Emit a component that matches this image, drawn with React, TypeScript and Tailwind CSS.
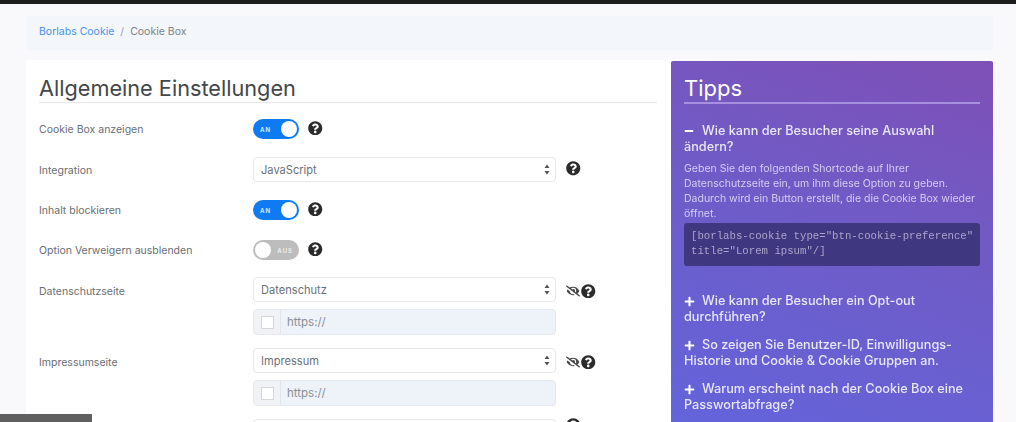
import React from 'react';
import { FaEyeSlash, FaMinus, FaPlus, FaQuestionCircle } from 'react-icons/fa';

const font = "font-['Inter','Liberation_Sans',sans-serif]";

function Toggle({ on }: { on: boolean }) {
  return on ? (
    <div className="flex h-[20px] w-[46px] items-center justify-between rounded-full bg-[#0f7bf2] pl-[7px] pr-[2px]">
      <span className="text-[6px] font-bold tracking-[1px] text-white/80">AN</span>
      <span className="h-[16px] w-[16px] rounded-full bg-white" />
    </div>
  ) : (
    <div className="flex h-[20px] w-[46px] items-center justify-between rounded-full bg-[#bdbdbd] pl-[2px] pr-[6px]">
      <span className="h-[16px] w-[16px] rounded-full bg-white" />
      <span className="text-[6px] font-bold tracking-[1px] text-white/70">AUS</span>
    </div>
  );
}

function Select({ value }: { value: string }) {
  return (
    <div className="flex h-[25px] w-[303px] items-center justify-between rounded-[4px] border border-[#e6e8ec] bg-white pl-[7px] pr-[5px] text-[11.1px] text-[#6c7178]">
      <span className="pt-[2px]">{value}</span>
      <svg width="6" height="11" viewBox="0 0 6 11" className="text-[#50545a]">
        <path d="M3 0.5L5.5 4H0.5Z M3 10.5L0.5 7H5.5Z" fill="currentColor" />
      </svg>
    </div>
  );
}

function UrlInput() {
  return (
    <div className="mt-[7px] flex h-[26px] w-[303px] overflow-hidden rounded-[4px] border border-[#e4e8ef] bg-[#eef2f9] text-[11.5px] text-[#8b9096]">
      <div className="flex w-[27px] items-center justify-center border-r border-[#e2e5ea] bg-[#f0f2f6]">
        <span className="h-[13px] w-[13px] border border-[#d4d6da] bg-white" />
      </div>
      <span className="flex items-center pl-[6px] pt-[2px]">https://</span>
    </div>
  );
}

function Help() {
  return <FaQuestionCircle className="text-[14.5px] text-[#2b2b2b]" />;
}

function Row({ label, className, children }: { label: string; className: string; children: React.ReactNode }) {
  return (
    <div className={`flex items-start ${className}`}>
      <div className="w-[214px] pt-[1px] text-[10.5px] leading-[20px] text-[#6a6e74]">{label}</div>
      {children}
    </div>
  );
}

function PageRow({ label, value, className }: { label: string; value: string; className: string }) {
  return (
    <Row label={label} className={`${className} [&>div:first-child]:pt-[5px]`}>
      <div>
        <div className="flex items-center">
          <Select value={value} />
          <FaEyeSlash className="ml-[10px] mt-[3px] text-[14px] text-[#4a4a4a]" />
          <span className="ml-[1px] mt-[3px] flex"><Help /></span>
        </div>
        <UrlInput />
      </div>
    </Row>
  );
}

function Tip({ icon, first, second, className }: { icon: React.ReactNode; first: string; second: string; className?: string }) {
  return (
    <div className={`text-[12.7px] font-medium leading-[16px] text-[#e9e6fa] ${className ?? ''}`}>
      <div className="flex items-center">
        <span className="mr-[7px] flex w-[11px] text-white">{icon}</span>
        {first}
      </div>
      <div>{second}</div>
    </div>
  );
}

export default function App() {
  return (
    <div className={`relative h-[422px] w-[1016px] overflow-hidden bg-[#f9f9fb] ${font}`}>
      <div className="h-[4px] bg-[#1c1c1c]" />
      <div className="blur-[0.6px]">
        <div className="mx-[26px] mt-[12px] flex h-[34px] w-[967px] items-center bg-[#f3f6fb] pb-[2px] pl-[13px] text-[10.5px]">
          <span className="text-[#4b93ee]">Borlabs Cookie</span>
          <span className="mx-[6px] text-[#9aa0a6]">/</span>
          <span className="text-[#7d8288]">Cookie Box</span>
        </div>

        <div className="mx-[26px] mt-[10px] flex w-[967px] items-start">
          {/* settings card */}
          <div className="h-[400px] w-[645px] bg-white pl-[13px] pr-[14px] pt-[15px]">
            <h2 className="border-b border-[#e8e8e8] text-[21.7px] leading-[27px] text-[#43464a]">Allgemeine Einstellungen</h2>
            <Row label="Cookie Box anzeigen" className="mt-[16px]">
              <div className="flex items-center">
                <Toggle on />
                <span className="ml-[9px] -mt-[2px] flex"><Help /></span>
              </div>
            </Row>
            <Row label="Integration" className="mt-[17px] [&>div:first-child]:pt-[4px]">
              <div className="flex items-center">
                <Select value="JavaScript" />
                <span className="ml-[10px] -mt-[2px] flex"><Help /></span>
              </div>
            </Row>
            <Row label="Inhalt blockieren" className="mt-[18px]">
              <div className="flex items-center">
                <Toggle on />
                <span className="ml-[9px] -mt-[2px] flex"><Help /></span>
              </div>
            </Row>
            <Row label="Option Verweigern ausblenden" className="mt-[19px]">
              <div className="flex items-center">
                <Toggle on={false} />
                <span className="ml-[9px] -mt-[2px] flex"><Help /></span>
              </div>
            </Row>
            <PageRow label="Datenschutzseite" value="Datenschutz" className="mt-[16px]" />
            <PageRow label="Impressumseite" value="Impressum" className="mt-[13px]" />
            <Row label="" className="mt-[13px]">
              <div className="flex items-start">
                <Select value="" />
                <span className="ml-[10px] -mt-[1px] flex"><Help /></span>
              </div>
            </Row>
          </div>

          {/* tips panel */}
          <div className="mt-[1px] h-[400px] w-[322px] rounded-t-[2px] bg-[linear-gradient(200deg,#7e50b6_0%,#6e5cc8_45%,#6265de_100%)] px-[13px] pt-[14px]">
            <h2 className="border-b-2 border-[#a78fe0] text-[22px] leading-[27px] text-white">Tipps</h2>
            <Tip icon={<FaMinus className="text-[10px]" />} first="Wie kann der Besucher seine Auswahl" second="ändern?" className="mt-[19px]" />
            <p className="mt-[6px] text-[10.5px] leading-[15px] text-[#d4cdf3]">
              Geben Sie den folgenden Shortcode auf Ihrer Datenschutzseite ein, um ihm diese Option zu geben. Dadurch wird ein Button erstellt, die die Cookie Box wieder öffnet.
            </p>
            <div className="mt-[2px] h-[43px] rounded-[3px] bg-[#3f3880] px-[7px] py-[6px] font-['Liberation_Mono',monospace] text-[10.7px] leading-[15px] text-[#a9a4cc]">
              <div className="whitespace-nowrap">[borlabs-cookie type="btn-cookie-preference"</div>
              <div>title="Lorem ipsum"/]</div>
            </div>
            <Tip icon={<FaPlus className="text-[11px]" />} first="Wie kann der Besucher ein Opt-out" second="durchführen?" className="mt-[27px]" />
            <Tip icon={<FaPlus className="text-[11px]" />} first="So zeigen Sie Benutzer-ID, Einwilligungs-" second="Historie und Cookie & Cookie Gruppen an." className="mt-[12px]" />
            <Tip icon={<FaPlus className="text-[11px]" />} first="Warum erscheint nach der Cookie Box eine" second="Passwortabfrage?" className="mt-[12px]" />
          </div>
        </div>
      </div>
      <div className="absolute bottom-0 left-0 h-[8px] w-[92px] bg-[#5f5f5f]" />
    </div>
  );
}
